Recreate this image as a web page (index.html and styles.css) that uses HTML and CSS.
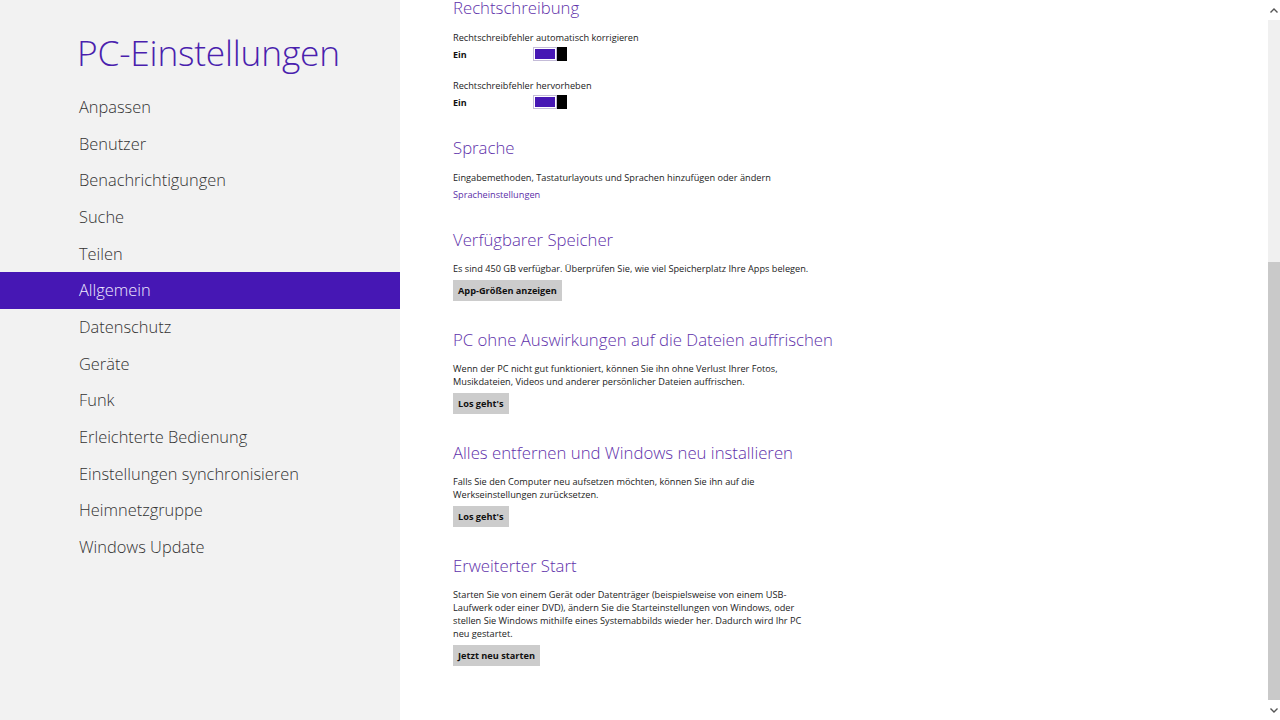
FILE: index.html
```html
<!DOCTYPE html>
<html lang="de">
<head>
<meta charset="utf-8">
<title>PC-Einstellungen</title>
<link rel="stylesheet" href="styles.css">
</head>
<body>
<div class="app">
  <nav class="sidebar">
    <h1 class="title">PC-Einstellungen</h1>
    <ul class="menu">
      <li class="menu-item">Anpassen</li>
      <li class="menu-item">Benutzer</li>
      <li class="menu-item">Benachrichtigungen</li>
      <li class="menu-item">Suche</li>
      <li class="menu-item">Teilen</li>
      <li class="menu-item active">Allgemein</li>
      <li class="menu-item">Datenschutz</li>
      <li class="menu-item">Geräte</li>
      <li class="menu-item">Funk</li>
      <li class="menu-item">Erleichterte Bedienung</li>
      <li class="menu-item">Einstellungen synchronisieren</li>
      <li class="menu-item">Heimnetzgruppe</li>
      <li class="menu-item">Windows Update</li>
    </ul>
  </nav>

  <main class="content">
    <section class="group first">
      <h2 class="heading">Rechtschreibung</h2>
      <div class="setting">
        <p class="text">Rechtschreibfehler automatisch korrigieren</p>
        <div class="switch-row">
          <span class="state">Ein</span>
          <span class="switch"><span class="switch-fill"></span><span class="switch-thumb"></span></span>
        </div>
      </div>
      <div class="setting second">
        <p class="text">Rechtschreibfehler hervorheben</p>
        <div class="switch-row">
          <span class="state">Ein</span>
          <span class="switch"><span class="switch-fill"></span><span class="switch-thumb"></span></span>
        </div>
      </div>
    </section>

    <section class="group">
      <h2 class="heading">Sprache</h2>
      <p class="text">Eingabemethoden, Tastaturlayouts und Sprachen hinzufügen oder ändern</p>
      <a class="link" href="#">Spracheinstellungen</a>
    </section>

    <section class="group">
      <h2 class="heading">Verfügbarer Speicher</h2>
      <p class="text">Es sind 450 GB verfügbar. Überprüfen Sie, wie viel Speicherplatz Ihre Apps belegen.</p>
      <button class="btn">App-Größen anzeigen</button>
    </section>

    <section class="group">
      <h2 class="heading">PC ohne Auswirkungen auf die Dateien auffrischen</h2>
      <p class="text narrow">Wenn der PC nicht gut funktioniert, können Sie ihn ohne Verlust Ihrer Fotos, Musikdateien, Videos und anderer persönlicher Dateien auffrischen.</p>
      <button class="btn">Los geht's</button>
    </section>

    <section class="group">
      <h2 class="heading">Alles entfernen und Windows neu installieren</h2>
      <p class="text narrow">Falls Sie den Computer neu aufsetzen möchten, können Sie ihn auf die Werkseinstellungen zurücksetzen.</p>
      <button class="btn">Los geht's</button>
    </section>

    <section class="group">
      <h2 class="heading">Erweiterter Start</h2>
      <p class="text narrow">Starten Sie von einem Gerät oder Datenträger (beispielsweise von einem USB-Laufwerk oder einer DVD), ändern Sie die Starteinstellungen von Windows, oder stellen Sie Windows mithilfe eines Systemabbilds wieder her. Dadurch wird Ihr PC neu gestartet.</p>
      <button class="btn">Jetzt neu starten</button>
    </section>
  </main>

  <div class="scrollbar">
    <span class="arrow up">
      <svg width="8" height="5" viewBox="0 0 8 5"><path d="M0.5 4.5 L4 1 L7.5 4.5" fill="none" stroke="#555" stroke-width="1.4"/></svg>
    </span>
    <div class="track">
      <div class="track-top"></div>
      <div class="thumb"></div>
    </div>
    <span class="arrow down">
      <svg width="8" height="5" viewBox="0 0 8 5"><path d="M0.5 0.5 L4 4 L7.5 0.5" fill="none" stroke="#555" stroke-width="1.4"/></svg>
    </span>
  </div>
</div>
</body>
</html>
```

FILE: styles.css
```css
* {
  box-sizing: border-box;
}

html, body {
  margin: 0;
  padding: 0;
  height: 100%;
  overflow: hidden;
}

body {
  font-family: "Open Sans", "Noto Sans", "DejaVu Sans", sans-serif;
  background: #ffffff;
  color: #222;
}

.app {
  display: flex;
  height: 720px;
}

/* ---- left navigation pane ---- */
.sidebar {
  width: 400px;
  flex: none;
  background: #f2f2f2;
  padding-top: 28px;
}

.title {
  margin: 0 0 0 77px;
  font-size: 35.3px;
  font-weight: 300;
  line-height: 48px;
  color: #4a1fae;
  letter-spacing: -0.2px;
}

.menu {
  list-style: none;
  margin: 13px 0 0;
  padding: 0;
}

.menu-item {
  height: 36.67px;
  line-height: 36.67px;
  padding-left: 79px;
  font-size: 16.4px;
  font-weight: 300;
  color: #333;
}

.menu-item.active {
  background: #4617b4;
  color: #f0eaff;
}

/* ---- settings content ---- */
.content {
  flex: 1;
  padding-left: 53px;
  display: flex;
  flex-direction: column;
  align-items: flex-start;
}

.group {
  display: flex;
  flex-direction: column;
  align-items: flex-start;
  margin-top: 27px;
}

.group.first {
  margin-top: -4px;
}

.heading {
  margin: 0 0 10.5px;
  font-size: 16.75px;
  font-weight: 300;
  line-height: 24px;
  color: #6031aa;
  white-space: nowrap;
}

.text {
  margin: 0;
  font-size: 9.2px;
  line-height: 13px;
  color: #222;
}

.text.narrow {
  max-width: 350px;
}

.setting.second {
  margin-top: 17.5px;
}

.switch-row {
  display: flex;
  align-items: center;
  margin-top: 3.5px;
  height: 14px;
}

.state {
  width: 80px;
  font-size: 9px;
  font-weight: 700;
  color: #111;
}

.switch {
  display: flex;
  width: 34px;
  height: 14px;
}

.switch-fill {
  flex: 1;
  border: 1px solid #c4bcd8;
  padding: 1px;
  background: #4617b4;
  background-clip: content-box;
}

.switch-thumb {
  width: 10px;
  background: #000;
}

.link {
  margin-top: 4px;
  font-size: 9.2px;
  line-height: 13px;
  color: #5b2ea8;
  text-decoration: none;
}

.btn {
  margin-top: 4.5px;
  height: 21px;
  padding: 0 5px;
  border: none;
  background: #cccccc;
  font-family: inherit;
  font-size: 9.2px;
  font-weight: 700;
  color: #111;
}

/* ---- scrollbar ---- */
.scrollbar {
  width: 12px;
  flex: none;
  display: flex;
  flex-direction: column;
  background: #fff;
}

.arrow {
  height: 20px;
  display: flex;
  align-items: center;
  justify-content: center;
}

.track {
  flex: 1;
  display: flex;
  flex-direction: column;
}

.track-top {
  height: 242px;
  background: #f0f0f0;
}

.thumb {
  flex: 1;
  background: #c9c9c9;
}
```
